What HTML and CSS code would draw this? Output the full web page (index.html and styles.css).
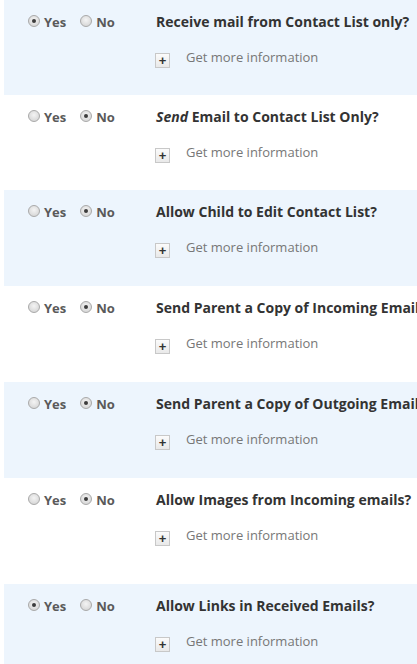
FILE: index.html
```html
<!DOCTYPE html>
<html>
<head>
<meta charset="utf-8">
<link rel="stylesheet" href="styles.css">
</head>
<body>
<div class="list">
  <div class="row alt">
    <div class="opts">
      <label class="opt"><span class="radio checked"></span>Yes</label>
      <label class="opt"><span class="radio"></span>No</label>
    </div>
    <div class="main">
      <div class="title">Receive mail from Contact List only?</div>
      <div class="info"><span class="plus">+</span><span class="more">Get more information</span></div>
    </div>
  </div>
  <div class="row">
    <div class="opts">
      <label class="opt"><span class="radio"></span>Yes</label>
      <label class="opt"><span class="radio checked"></span>No</label>
    </div>
    <div class="main">
      <div class="title"><em>Send</em> Email to Contact List Only?</div>
      <div class="info"><span class="plus">+</span><span class="more">Get more information</span></div>
    </div>
  </div>
  <div class="row alt r3">
    <div class="opts">
      <label class="opt"><span class="radio"></span>Yes</label>
      <label class="opt"><span class="radio checked"></span>No</label>
    </div>
    <div class="main">
      <div class="title">Allow Child to Edit Contact List?</div>
      <div class="info"><span class="plus">+</span><span class="more">Get more information</span></div>
    </div>
  </div>
  <div class="row r3">
    <div class="opts">
      <label class="opt"><span class="radio"></span>Yes</label>
      <label class="opt"><span class="radio checked"></span>No</label>
    </div>
    <div class="main">
      <div class="title">Send Parent a Copy of Incoming Emails?</div>
      <div class="info"><span class="plus">+</span><span class="more">Get more information</span></div>
    </div>
  </div>
  <div class="row alt r3">
    <div class="opts">
      <label class="opt"><span class="radio"></span>Yes</label>
      <label class="opt"><span class="radio checked"></span>No</label>
    </div>
    <div class="main">
      <div class="title">Send Parent a Copy of Outgoing Emails?</div>
      <div class="info"><span class="plus">+</span><span class="more">Get more information</span></div>
    </div>
  </div>
  <div class="row tall">
    <div class="opts">
      <label class="opt"><span class="radio"></span>Yes</label>
      <label class="opt"><span class="radio checked"></span>No</label>
    </div>
    <div class="main">
      <div class="title">Allow Images from Incoming emails?</div>
      <div class="info"><span class="plus">+</span><span class="more">Get more information</span></div>
    </div>
  </div>
  <div class="row alt">
    <div class="opts">
      <label class="opt"><span class="radio checked"></span>Yes</label>
      <label class="opt"><span class="radio"></span>No</label>
    </div>
    <div class="main">
      <div class="title">Allow Links in Received Emails?</div>
      <div class="info"><span class="plus">+</span><span class="more">Get more information</span></div>
    </div>
  </div>
</div>
</body>
</html>
```
FILE: styles.css
```css
html, body {
  margin: 0;
  padding: 0;
  background: #ffffff;
  overflow: hidden;
  font-family: "Open Sans", "Liberation Sans", sans-serif;
}
.list {
  width: 560px;
  margin-left: 4px;
}
.row {
  display: flex;
  align-items: flex-start;
  height: 95px;
  box-sizing: border-box;
  padding: 13px 0 0 24px;
}
.row.r3 { height: 96px; }
.row.tall { height: 106px; }
.row.alt { background: #edf5fd; }
.opts {
  width: 128px;
  display: flex;
  gap: 14px;
  height: 18px;
  align-items: center;
}
.opt {
  display: flex;
  align-items: center;
  font-size: 13px;
  font-weight: 700;
  line-height: 18px;
  color: #5a5a5a;
}
.radio {
  width: 10px;
  height: 10px;
  border: 1px solid #a9a9a9;
  border-radius: 50%;
  margin-right: 4px;
  margin-top: -2px;
  background: radial-gradient(circle at 50% 40%, #f4f4f4 0%, #dedede 60%, #cfcfcf 100%);
  box-sizing: content-box;
  position: relative;
}
.radio.checked::after {
  content: "";
  position: absolute;
  left: 3px;
  top: 3px;
  width: 4px;
  height: 4px;
  border-radius: 50%;
  background: #3c3c3c;
}
.main {
  display: flex;
  flex-direction: column;
}
.title {
  font-size: 14px;
  font-weight: 700;
  line-height: 18px;
  color: #333333;
  white-space: nowrap;
}
.title em {
  font-style: italic;
}
.info {
  display: flex;
  align-items: flex-start;
  margin-top: 17px;
  height: 18px;
}
.plus {
  width: 13px;
  height: 13px;
  margin: 5px 16px 0 -1px;
  border: 1px solid #c8c8c8;
  background: linear-gradient(#fbfbfb, #e9e9e9);
  color: #333;
  font-family: "Liberation Sans", sans-serif;
  font-weight: 700;
  font-size: 13px;
  line-height: 13px;
  text-align: center;
}
.more {
  font-size: 13px;
  line-height: 18px;
  color: #777777;
}
```
